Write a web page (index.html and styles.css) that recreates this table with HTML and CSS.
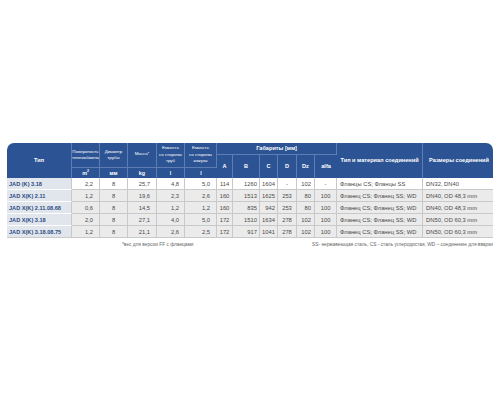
FILE: index.html
```html
<!DOCTYPE html>
<html lang="ru">
<head>
<meta charset="utf-8">
<title>JAD</title>
<link rel="stylesheet" href="styles.css">
</head>
<body>
<div class="page">
  <table class="spec">
    <colgroup>
      <col class="c-type"><col class="c-sm"><col class="c-sm"><col class="c-mass"><col class="c-sm"><col class="c-vol">
      <col class="c-a"><col class="c-b"><col class="c-c"><col class="c-d"><col class="c-c"><col class="c-alfa">
      <col class="c-conn"><col class="c-size">
    </colgroup>
    <thead>
      <tr class="h1">
        <th rowspan="3" class="big first">Тип</th>
        <th rowspan="2" class="tiny">Поверхность<br>теплообмена</th>
        <th rowspan="2" class="tiny">Диаметр<br>трубы</th>
        <th rowspan="2" class="tiny top">Масса*</th>
        <th rowspan="2" class="tiny">Емкость<br>со стороны<br>труб</th>
        <th rowspan="2" class="tiny">Емкость<br>со стороны<br>кожуха</th>
        <th colspan="6" class="big gab">Габариты [мм]</th>
        <th rowspan="3" class="big">Тип и материал соединений</th>
        <th rowspan="3" class="big last">Размеры соединений</th>
      </tr>
      <tr class="h2">
        <th rowspan="2" class="big">A</th>
        <th rowspan="2" class="big">B</th>
        <th rowspan="2" class="big">C</th>
        <th rowspan="2" class="big">D</th>
        <th rowspan="2" class="big">Dz</th>
        <th rowspan="2" class="big">alfa</th>
      </tr>
      <tr class="h3">
        <th class="unit">m<sup>2</sup></th>
        <th class="unit">мм</th>
        <th class="unit">kg</th>
        <th class="unit">l</th>
        <th class="unit">l</th>
      </tr>
    </thead>
    <tbody>
      <tr class="odd">
        <td class="type">JAD (K) 3.18</td><td class="r6">2,2</td><td class="ctr">8</td><td class="r6">25,7</td><td class="r4">4,8</td><td class="r6">5,0</td>
        <td class="ctr">114</td><td class="r2">1260</td><td class="r2">1604</td><td class="ctr">-</td><td class="r3">102</td><td class="ctr">-</td>
        <td class="txt">Фланцы CS; Фланцы SS</td><td class="txt">DN32, DN40</td>
      </tr>
      <tr>
        <td class="type">JAD X(K) 2.11</td><td class="r6">1,2</td><td class="ctr">8</td><td class="r6">19,6</td><td class="r4">2,3</td><td class="r6">2,6</td>
        <td class="ctr">160</td><td class="r2">1513</td><td class="r2">1625</td><td class="ctr">253</td><td class="r3">80</td><td class="ctr">100</td>
        <td class="txt">Фланец CS; Фланец SS; WD</td><td class="txt">DN40, OD 48,3 mm</td>
      </tr>
      <tr>
        <td class="type">JAD X(K) 2.11.08.68</td><td class="r6">0,6</td><td class="ctr">8</td><td class="r6">14,5</td><td class="r4">1,2</td><td class="r6">1,2</td>
        <td class="ctr">160</td><td class="r2">835</td><td class="r2">942</td><td class="ctr">253</td><td class="r3">80</td><td class="ctr">100</td>
        <td class="txt">Фланец CS; Фланец SS; WD</td><td class="txt">DN40, OD 48,3 mm</td>
      </tr>
      <tr>
        <td class="type">JAD X(K) 3.18</td><td class="r6">2,0</td><td class="ctr">8</td><td class="r6">27,1</td><td class="r4">4,0</td><td class="r6">5,0</td>
        <td class="ctr">172</td><td class="r2">1510</td><td class="r2">1634</td><td class="ctr">278</td><td class="r3">102</td><td class="ctr">100</td>
        <td class="txt">Фланец CS; Фланец SS; WD</td><td class="txt">DN50, OD 60,3 mm</td>
      </tr>
      <tr>
        <td class="type">JAD X(K) 3.18.08.75</td><td class="r6">1,2</td><td class="ctr">8</td><td class="r6">21,1</td><td class="r4">2,6</td><td class="r6">2,5</td>
        <td class="ctr">172</td><td class="r2">917</td><td class="r2">1041</td><td class="ctr">278</td><td class="r3">102</td><td class="ctr">100</td>
        <td class="txt">Фланец CS; Фланец SS; WD</td><td class="txt">DN50, OD 60,3 mm</td>
      </tr>
    </tbody>
  </table>
  <div class="notes">
    <span class="note-left">*вес для версии FF с фланцами</span>
    <span class="note-right">SS- нержавеющая сталь, CS - сталь углеродистая, WD – соединение для вварки</span>
  </div>
</div>
</body>
</html>
```
FILE: styles.css
```css
html, body {
  margin: 0;
  padding: 0;
  background: #ffffff;
}
body {
  font-family: "Liberation Sans", Arial, sans-serif;
}
.page {
  padding: 143px 7px 0 7px;
  width: 486px;
}
.spec {
  width: 486px;
  table-layout: fixed;
  border-collapse: separate;
  border-spacing: 0;
}
.c-type { width: 65px; }
.c-sm { width: 28px; }
.c-mass { width: 29px; }
.c-vol { width: 32px; }
.c-a { width: 16px; }
.c-b { width: 27px; }
.c-c { width: 18px; }
.c-d { width: 19px; }
.c-alfa { width: 22px; }
.c-conn { width: 86px; }
.c-size { width: 70px; }

.spec th {
  background: #2c5393;
  color: #ffffff;
  padding: 0;
  border-right: 1px solid #5d7db3;
  line-height: 1.2;
  overflow: hidden;
  white-space: nowrap;
}
.spec th:last-child { border-right: none; }
.spec th.first { border-top-left-radius: 7px; }
.spec th.last { border-top-right-radius: 7px; text-align: left; padding-left: 6px; }
.h1 { height: 12px; }
.h2 { height: 13px; }
.h3 { height: 10px; }
.spec th.gab { border-bottom: 1px solid #5d7db3; }
.spec th.tiny { border-bottom: 1px solid #5d7db3; }
.spec th.big {
  font-size: 5.6px;
  font-weight: bold;
}
.spec th.tiny {
  font-size: 4.4px;
  font-weight: normal;
  vertical-align: middle;
  line-height: 1.45;
}
.spec th.top { vertical-align: top; padding-top: 8px; }
.spec th.unit {
  font-size: 5.4px;
  font-weight: bold;
}
.spec th.unit sup { font-size: 3.5px; }

.spec td {
  height: 11px;
  padding: 0;
  font-size: 5.8px;
  color: #4a4a4a;
  background: #ebebeb;
  border-right: 1px solid #c9c9c9;
  border-top: 1px solid #c9c9c9;
  white-space: nowrap;
  overflow: hidden;
}
.spec tr.odd td { background: #ffffff; border-top: none; }
.spec td:last-child { border-right: none; }
.spec td.type {
  background: #e1e6ed;
  color: #2b4a82;
  font-weight: bold;
  font-size: 5.6px;
  padding-left: 2px;
  border-top: 1px solid #ffffff;
  border-right: 1px solid #c9c9c9;
}
.spec tr.odd td.type { background: #e1e6ed; }
.spec tbody tr:last-child td { border-bottom: 1px solid #c9c9c9; }
.ctr { text-align: center; }
.r2 { text-align: right; padding-right: 2px !important; }
.r3 { text-align: right; padding-right: 3px !important; }
.r4 { text-align: right; padding-right: 5px !important; }
.r6 { text-align: right; padding-right: 6px !important; }
.txt { text-align: left; padding-left: 3px !important; }

.notes {
  display: flex;
  justify-content: space-between;
  padding: 4px 0 0 115px;
  font-size: 4.8px;
  color: #666666;
}
```
